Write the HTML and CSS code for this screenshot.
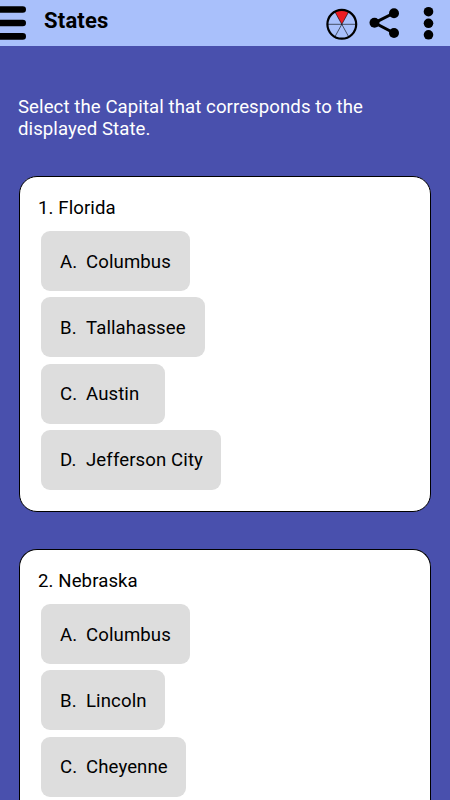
FILE: index.html
```html
<!DOCTYPE html>
<html lang="en">
<head>
<meta charset="utf-8">
<title>States</title>
<link rel="stylesheet" href="styles.css">
</head>
<body>
<header class="bar">
  <svg class="menu" width="27" height="46" viewBox="0 0 27 46"><path d="M-5 9.500H22.700M-5 23H22.700M-5 36.400H22.700" stroke="#000" stroke-width="6.600" stroke-linecap="round"/></svg>
  <h1 class="title">States</h1>
  <svg class="actions" width="130" height="46" viewBox="320 0 130 46">
    <path d="M341.800 24.300L335 12A14.500 14.500 0 0 1 348.600 12Z" fill="#ed1c24"/>
    <path d="M328 24.300H356M335 12L348.600 36.600M348.600 12L335 36.600" stroke="#000" stroke-width=".6"/>
    <circle cx="341.800" cy="24.300" r="14.400" fill="none" stroke="#000" stroke-width="2.200"/>
    <path d="M394 13L374.500 22.800L394 33" fill="none" stroke="#000" stroke-width="3"/>
    <circle cx="394" cy="13.200" r="5"/><circle cx="374.500" cy="22.800" r="5"/><circle cx="394" cy="33" r="5"/>
    <circle cx="428.500" cy="11.700" r="4.800"/><circle cx="428.500" cy="23.300" r="4.800"/><circle cx="428.500" cy="34.800" r="4.800"/>
  </svg>
</header>
<main class="quiz">
  <p class="intro">Select the Capital that corresponds to the displayed State.</p>
  <section class="card">
    <h2 class="question">1. Florida</h2>
    <button class="answer columbus"><span>A.</span>Columbus</button>
    <button class="answer tallahassee"><span>B.</span>Tallahassee</button>
    <button class="answer austin"><span>C.</span>Austin</button>
    <button class="answer jefferson"><span>D.</span>Jefferson City</button>
  </section>
  <section class="card card-last">
    <h2 class="question">2. Nebraska</h2>
    <button class="answer columbus"><span>A.</span>Columbus</button>
    <button class="answer lincoln"><span>B.</span>Lincoln</button>
    <button class="answer cheyenne"><span>C.</span>Cheyenne</button>
  </section>
</main>
</body>
</html>
```
FILE: styles.css
```css
* { box-sizing: border-box; }
html, body { margin: 0; height: 800px; overflow: hidden; }
body { background: #4950ad; font-family: Roboto, sans-serif; color: #000; display: flex; flex-direction: column; }
.bar { height: 46px; flex: none; background: #a9c0fb; display: flex; }
.menu, .actions { display: block; flex: none; }
.title { margin: 8px 0 0 17px; flex: 1; font-size: 22px; line-height: 26px; font-weight: 700; letter-spacing: .2px; }
.quiz { flex: 1; min-height: 0; padding: 50px 19px 0; display: flex; flex-direction: column; }
.intro { margin: 0 0 36px -1px; flex: none; color: #fff; font-size: 18.600px; line-height: 22px; letter-spacing: .08px; }
.card { height: 336px; flex: none; margin-bottom: 37px; padding: 18.500px 21px; background: #fff; border: 1.500px solid #000; border-radius: 18px; display: flex; flex-direction: column; align-items: flex-start; gap: 6.200px; }
.card-last { height: auto; flex: 1; min-height: 0; margin-bottom: 0; padding-bottom: 0; border-bottom: 0; border-radius: 18px 18px 0 0; }
.question { margin: 0 0 5.500px -3px; font-size: 18.600px; line-height: 24px; font-weight: 400; letter-spacing: .1px; }
.answer { height: 60px; flex: none; padding: 1px 19px 0; border: 0; border-radius: 9px; background: #ddd; color: #000; font: 400 18.600px Roboto, sans-serif; letter-spacing: .1px; white-space: nowrap; text-align: left; }
.answer span { display: inline-block; width: 26px; }
.columbus { width: 149px; }
.tallahassee { width: 164px; }
.austin, .lincoln { width: 124px; }
.jefferson { width: 180px; }
.cheyenne { width: 145px; }
```
